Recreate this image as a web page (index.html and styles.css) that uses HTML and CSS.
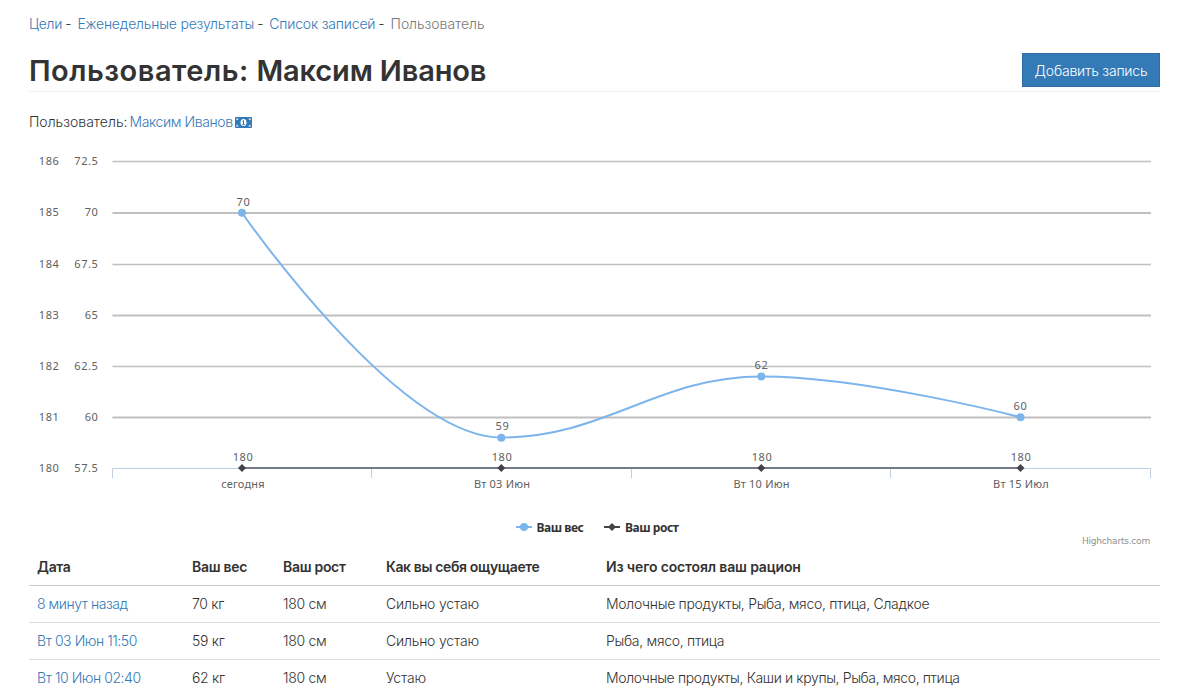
FILE: index.html
```
<!DOCTYPE html>
<html lang="ru">
  <head>
    <meta charset="utf-8">
    <meta name="viewport" content="width=device-width, initial-scale=1">
    <title>Пользователь: Максим Иванов</title>
    <link rel="stylesheet" href="styles.css">
  </head>

  <body>
    <div class="container">

      <ul class="breadcrumb">
        <li><a href="#">Цели</a></li>
        <li><a href="#">Еженедельные результаты</a></li>
        <li><a href="#">Список записей</a></li>
        <li class="active">Пользователь</li>
      </ul>

      <div class="page_header">
        <h1>Пользователь: <span class="name">Максим Иванов</span></h1>
        <a class="btn" href="#">Добавить запись</a>
      </div>

      <p class="user">
        <span>Пользователь:</span>
        <a href="#">
          <span class="user_name">Максим Иванов</span>
          <svg class="icon_money" width="17" height="11" viewBox="0 0 17 11">
            <rect width="17" height="11" rx="1" fill="#337ab7"/>
            <path d="M1.500 3.200V1.500h2a2 2 0 0 1-2 1.700zM15.500 3.200V1.500h-2a2 2 0 0 0 2 1.700zM1.500 7.800v1.700h2a2 2 0 0 0-2-1.700zM15.500 7.800v1.700h-2a2 2 0 0 1 2-1.700z" fill="#fff"/>
            <ellipse cx="8.500" cy="5.500" rx="3" ry="3.500" fill="#fff"/>
            <path d="M7.500 4.200l1-.7v4M7.300 7.500h2.400" stroke="#337ab7" fill="none"/>
          </svg>
        </a>
      </p>

      <svg class="chart" width="1131" height="400" viewBox="29 150 1131 400">
        <g class="grid">
          <path d="M112.500 161.500H1151M112.500 264.500H1151M112.500 366.500H1151"/>
          <path class="thick" d="M112.500 213H1151M112.500 315.500H1151M112.500 417.500H1151"/>
        </g>
        <path class="axis" d="M112.500 478V468.500H1150.500V478M371.500 468.500V478M631.500 468.500V478M890.500 468.500V478"/>

        <path class="weight" d="M242 212.700C242 212.700 397.500 437.500 501.300 437.500C605 437.500 657.500 376.500 761.300 376.500C865 376.500 1020.500 417.300 1020.500 417.300"/>
        <path class="height" d="M242 468H1020.500"/>
        <g fill="#7cb5ec">
          <circle cx="242" cy="212.700" r="4"/>
          <circle cx="501.300" cy="437.700" r="4"/>
          <circle cx="761.300" cy="376.500" r="4"/>
          <circle cx="1020.500" cy="417.300" r="4"/>
        </g>
        <path fill="#434348" d="M242 464l4 4-4 4-4-4zM501.300 464l4 4-4 4-4-4zM761.300 464l4 4-4 4-4-4zM1020.500 464l4 4-4 4-4-4z"/>

        <g class="labels end">
          <text x="59.500" y="165">186</text>
          <text x="59.500" y="216">185</text>
          <text x="59.500" y="268">184</text>
          <text x="59.500" y="319">183</text>
          <text x="59.500" y="370">182</text>
          <text x="59.500" y="421">181</text>
          <text x="59.500" y="472">180</text>
          <text x="98.500" y="165">72.5</text>
          <text x="98.500" y="216">70</text>
          <text x="98.500" y="268">67.5</text>
          <text x="98.500" y="319">65</text>
          <text x="98.500" y="370">62.5</text>
          <text x="98.500" y="421">60</text>
          <text x="98.500" y="472">57.5</text>
        </g>
        <g class="labels middle">
          <text x="243.500" y="206">70</text>
          <text x="502.500" y="430">59</text>
          <text x="761.500" y="369">62</text>
          <text x="1020.500" y="410">60</text>
          <text x="243" y="461">180</text>
          <text x="502" y="461">180</text>
          <text x="762" y="461">180</text>
          <text x="1021" y="461">180</text>
        </g>
        <g class="labels middle dates">
          <text x="243" y="488">сегодня</text>
          <text x="502" y="488">Вт 03 Июн</text>
          <text x="761.500" y="488">Вт 10 Июн</text>
          <text x="1021" y="488">Вт 15 Июл</text>
        </g>

        <path class="weight" d="M516 527H532"/>
        <circle cx="524" cy="527" r="4" fill="#7cb5ec"/>
        <text class="legend" x="536.500" y="532">Ваш вес</text>
        <path class="height_key" d="M604 527H620"/>
        <path fill="#434348" d="M612 523l4 4-4 4-4-4z"/>
        <text class="legend" x="625" y="532">Ваш рост</text>
        <text class="credits" x="1150" y="544">Highcharts.com</text>
      </svg>

      <table class="table">
        <thead>
          <tr>
            <th class="c_date">Дата</th>
            <th class="c_weight">Ваш вес</th>
            <th class="c_height">Ваш рост</th>
            <th class="c_feel">Как вы себя ощущаете</th>
            <th class="c_food">Из чего состоял ваш рацион</th>
          </tr>
        </thead>
        <tbody>
          <tr>
            <td><a href="#">8 минут назад</a></td>
            <td>70 кг</td>
            <td>180 см</td>
            <td class="feel">Сильно устаю</td>
            <td>Молочные продукты, Рыба, мясо, птица, Сладкое</td>
          </tr>
          <tr>
            <td><a href="#">Вт 03 Июн 11:50</a></td>
            <td>59 кг</td>
            <td>180 см</td>
            <td class="feel">Сильно устаю</td>
            <td>Рыба, мясо, птица</td>
          </tr>
          <tr>
            <td><a href="#">Вт 10 Июн 02:40</a></td>
            <td>62 кг</td>
            <td>180 см</td>
            <td class="feel">Устаю</td>
            <td class="long">Молочные продукты, Каши и крупы, Рыба, мясо, птица</td>
          </tr>
        </tbody>
      </table>

    </div>
  </body>
</html>
```
FILE: styles.css
```
* {
  box-sizing: border-box;
}

body {
  margin: 0;
  height: 695px;
  overflow: hidden;
  background-color: #fff;
  color: #333;
  font-family: Inter, "Open Sans", sans-serif;
  font-size: 14px;
  font-weight: 300;
  line-height: 20px;
}

a {
  color: #337ab7;
  text-decoration: none;
}

.container {
  width: 1131px;
  margin: 0 0 0 29px;
  padding-top: 14px;
}

.breadcrumb {
  display: flex;
  height: 19px;
  margin: 0;
  padding: 0;
  list-style: none;
  letter-spacing: -0.2px;
}

.breadcrumb li + li:before {
  content: "-";
  padding: 0 6px 0 3px;
  color: #333;
}

.breadcrumb .active {
  color: #777;
  letter-spacing: -0.05px;
}

.page_header {
  display: flex;
  justify-content: space-between;
  height: 59px;
  border-bottom: 1px solid #eee;
}

h1 {
  margin: 20px 0 0;
  font-size: 29px;
  font-weight: 600;
  line-height: 36px;
  letter-spacing: 0.5px;
}

h1 .name {
  letter-spacing: -0.15px;
}

.btn {
  width: 138px;
  height: 34px;
  margin-top: 20px;
  padding: 7px 0;
  background-color: #337ab7;
  border: 1px solid #2e6da4;
  color: #fff;
  text-align: center;
  line-height: 19px;
  letter-spacing: -0.2px;
}

.user {
  display: flex;
  gap: 2px;
  height: 20px;
  margin: 20px 0 18px;
}

.user a {
  display: flex;
  align-items: center;
  gap: 2px;
}

.user_name {
  letter-spacing: -0.4px;
}

.chart {
  display: block;
}

.grid path {
  stroke: #c0c0c0;
  stroke-width: 1.5;
}

.grid .thick {
  stroke-width: 2;
}

.axis {
  fill: none;
  stroke: #c0d0e0;
}

.weight {
  fill: none;
  stroke: #7cb5ec;
  stroke-width: 2;
}

.height {
  stroke: #737c84;
  stroke-width: 2;
}

.height_key {
  stroke: #434348;
  stroke-width: 2;
}

.labels,
.legend {
  font-family: "Noto Sans", sans-serif;
  font-size: 11px;
  font-weight: 400;
  letter-spacing: 0.6px;
  fill: #606060;
}

.end {
  text-anchor: end;
}

.middle {
  text-anchor: middle;
}

.dates {
  letter-spacing: 0.2px;
}

.legend {
  font-size: 12px;
  font-weight: 700;
  letter-spacing: -0.45px;
  fill: #333;
}

.credits {
  font-family: "DejaVu Sans", sans-serif;
  font-size: 9px;
  font-weight: 400;
  letter-spacing: -0.2px;
  text-anchor: end;
  fill: #909090;
}

.table {
  width: 100%;
  table-layout: fixed;
  border-collapse: separate;
  border-spacing: 0;
  letter-spacing: -0.3px;
}

.table th,
.table td {
  height: 36px;
  padding: 7px 8px 8px;
  text-align: left;
  white-space: nowrap;
  border-bottom: 1px solid #ddd;
}

.table th {
  font-weight: 600;
  border-bottom-color: #ccc;
}

.table tbody td {
  height: 37px;
  padding: 8px;
}

.table tbody tr:nth-child(3) td {
  padding-top: 7px;
}

.table a {
  letter-spacing: -0.45px;
}

.table .feel {
  letter-spacing: -0.2px;
}

.table .long {
  letter-spacing: -0.38px;
}

.c_date {
  width: 155px;
}

.c_weight {
  width: 91px;
}

.c_height {
  width: 103px;
}

.c_feel {
  width: 220px;
  letter-spacing: -0.38px;
}

.c_food {
  letter-spacing: -0.15px;
}
```
